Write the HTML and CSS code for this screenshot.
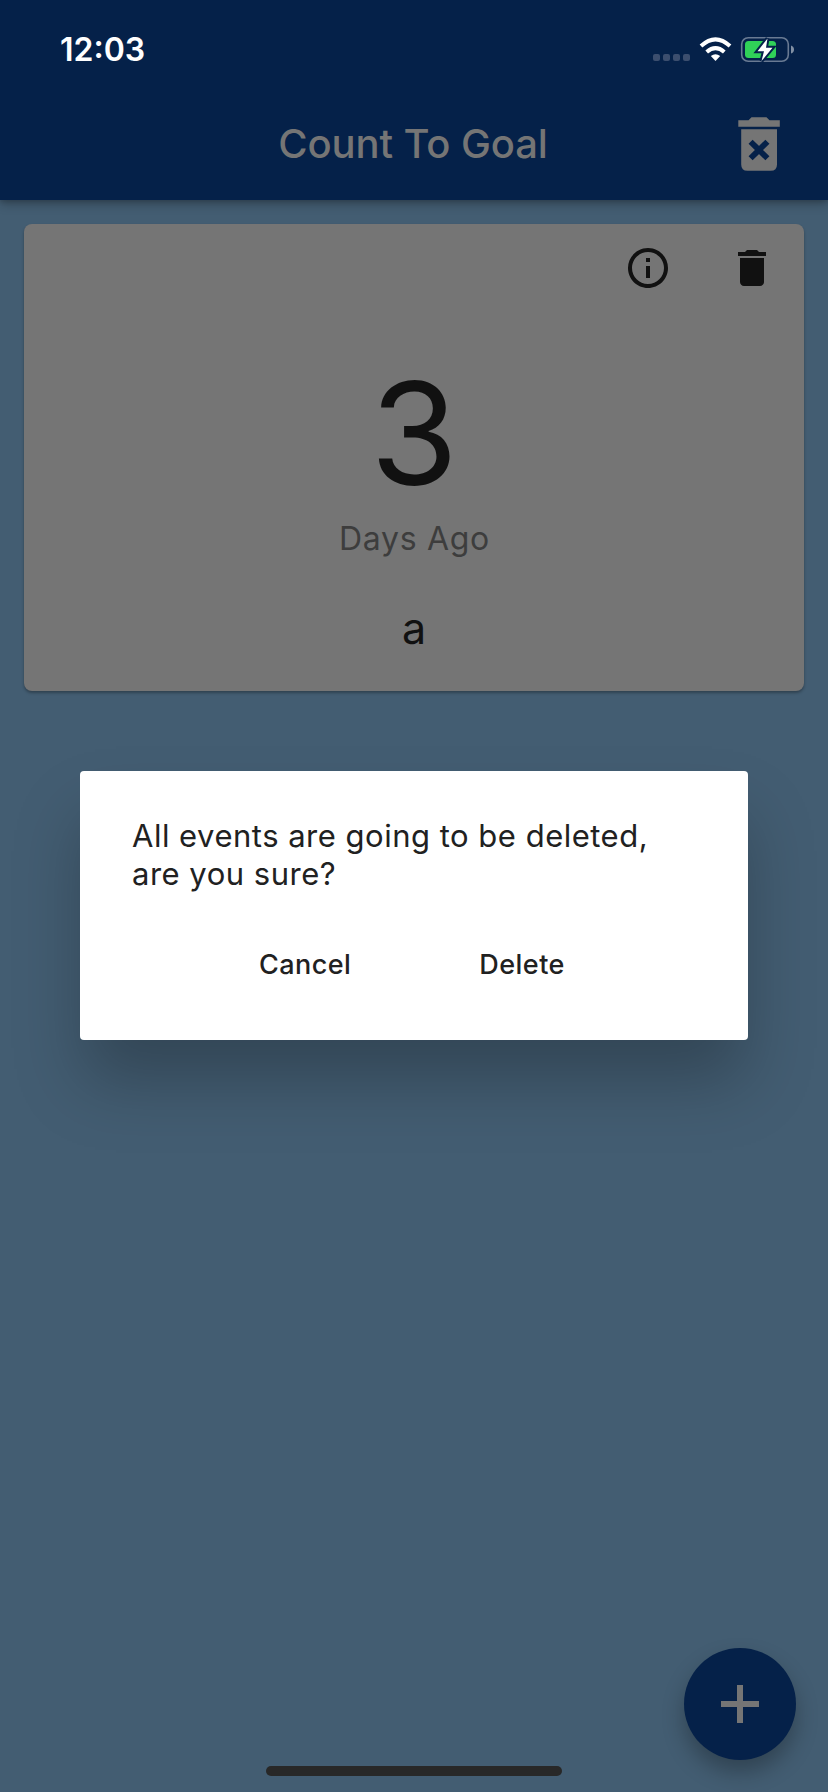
FILE: index.html
```html
<!DOCTYPE html>
<html lang="en">
<head>
<meta charset="utf-8">
<title>Count To Goal</title>
<link rel="stylesheet" href="styles.css">
</head>
<body>
<div class="screen">
  <header class="header">
    <div class="status">
      <span class="time">12:03</span>
      <svg class="indicators" width="144" height="28" viewBox="652 36 144 28">
        <g fill="#3c4e6e"><rect x="653" y="54" width="7" height="7" rx="2"/><rect x="663" y="54" width="7" height="7" rx="2"/><rect x="673" y="54" width="7" height="7" rx="2"/><rect x="683" y="54" width="7" height="7" rx="2"/></g>
        <path d="M710.800 56Q715.500 52.400 720.200 56L715.500 61Z" fill="#fff"/>
        <g fill="none" stroke="#fff" stroke-width="4"><path d="M706.700 52Q715.500 44.200 724.300 52"/><path d="M701 46Q715.500 32.600 730 46"/></g>
        <rect x="741.700" y="37.700" width="46.600" height="23.600" rx="6.500" fill="none" stroke="#697a93" stroke-width="1.600"/>
        <path d="M791 45.500Q794 46.500 794 49.500T791 53.500Z" fill="#8290a4"/>
        <rect x="745" y="41" width="31" height="17" rx="3.500" fill="#30d158"/>
        <path d="M767.500 38.500L757.500 51.300H764L761.500 61L772.500 47.700H766Z" fill="#fff" stroke="#052149" stroke-width="4" paint-order="stroke"/>
      </svg>
    </div>
    <div class="bar">
      <h1 class="title">Count To Goal</h1>
      <svg class="clear" width="44" height="56" viewBox="737 116 44 56">
        <path fill="#757575" d="M738.300 120.300H748.500L751.500 117.200H766.500L769.500 120.300H779.800V126.700H738.300ZM741.200 129.200H777V164.500Q777 170.800 770.700 170.800H747.500Q741.200 170.800 741.200 164.500Z"/>
        <path d="M750.600 141.700L767.400 158.300M767.400 141.700L750.600 158.300" stroke="#052149" stroke-width="5.800"/>
      </svg>
    </div>
  </header>
  <main class="list">
    <article class="card">
      <div class="actions">
        <svg class="icon" viewBox="0 0 24 24"><path d="M11 7h2v2h-2zm0 4h2v6h-2zm1-9C6.480 2 2 6.480 2 12s4.480 10 10 10 10-4.480 10-10S17.520 2 12 2zm0 18c-4.410 0-8-3.590-8-8s3.590-8 8-8 8 3.590 8 8-3.590 8-8 8z"/></svg>
        <svg class="icon" viewBox="0 0 24 24"><path d="M6 19c0 1.100.9 2 2 2h8c1.100 0 2-.9 2-2V7H6v12zM19 4h-3.500l-1-1h-5l-1 1H5v2h14V4z"/></svg>
      </div>
      <div class="count">3</div>
      <div class="unit">Days Ago</div>
      <div class="name">a</div>
    </article>
  </main>
  <div class="overlay">
    <section class="dialog" role="dialog">
      <p class="message">All events are going to be deleted,<br>are you sure?</p>
      <div class="buttons"><span class="button">Cancel</span><span class="button">Delete</span></div>
    </section>
  </div>
  <div class="fab">
    <svg width="38" height="38" viewBox="0 0 38 38"><path d="M16 0h6v16h16v6H22v16h-6V22H0v-6h16z" fill="#757575"/></svg>
  </div>
  <div class="home"></div>
</div>
</body>
</html>
```
FILE: styles.css
```css
* { box-sizing: border-box; }
body { margin: 0; font-family: Inter, "Liberation Sans", sans-serif; }
svg { display: block; flex: none; }
.screen { position: relative; width: 828px; height: 1792px; overflow: hidden; background: #435d72; }
.header { position: relative; height: 200px; background: #052149; box-shadow: 0 4px 10px rgba(0, 0, 0, .26), 0 2px 4px rgba(0, 0, 0, .12); }
.status { height: 88px; padding: 36px 32px 0 60px; display: flex; justify-content: space-between; }
.time { color: #fff; font-size: 32px; line-height: 28px; font-weight: 600; }
.bar { height: 112px; padding: 0 47px; display: grid; grid-template-columns: 44px 1fr 44px; align-items: center; }
.title { grid-column: 2; margin: 0; padding-right: 2px; text-align: center; color: #757575; font-size: 40px; line-height: 48px; font-weight: 500; letter-spacing: -.1px; white-space: nowrap; }
.list { padding: 24px; }
.card { height: 467px; border-radius: 8px; background: #757575; box-shadow: 0 2px 3px rgba(0, 0, 0, .3); text-align: center; }
.actions { display: flex; justify-content: flex-end; gap: 56px; padding: 20px 28px 0 0; }
.icon { width: 48px; height: 48px; fill: #111; }
.count { margin-top: 54px; font-size: 142px; line-height: 174px; color: #111; }
.unit { padding-left: 1px; font-size: 32px; line-height: 38px; color: #3d3d3d; letter-spacing: .7px; }
.name { margin-top: 43px; font-size: 43px; line-height: 54px; color: #111; }
.overlay { position: absolute; inset: 0; padding: 771px 80px 0; }
.dialog { height: 269px; border-radius: 4px; background: #fff; padding: 46px 52px 0; color: #212121; box-shadow: 0 44px 64px -4px rgba(0, 0, 0, .25); }
.message { margin: 0; font-size: 31px; line-height: 38px; letter-spacing: .5px; white-space: nowrap; }
.buttons { display: flex; padding: 55px 0 0 127px; gap: 128px; }
.button { font-size: 27px; line-height: 34px; font-weight: 500; letter-spacing: .45px; }
.fab { position: absolute; right: 32px; bottom: 32px; width: 112px; height: 112px; border-radius: 50%; display: flex; align-items: center; justify-content: center; background: #052149; box-shadow: 0 12px 22px rgba(0, 0, 0, .28); }
.home { position: absolute; left: 266px; bottom: 16px; width: 296px; height: 10px; border-radius: 5px; background: #282828; }
```
